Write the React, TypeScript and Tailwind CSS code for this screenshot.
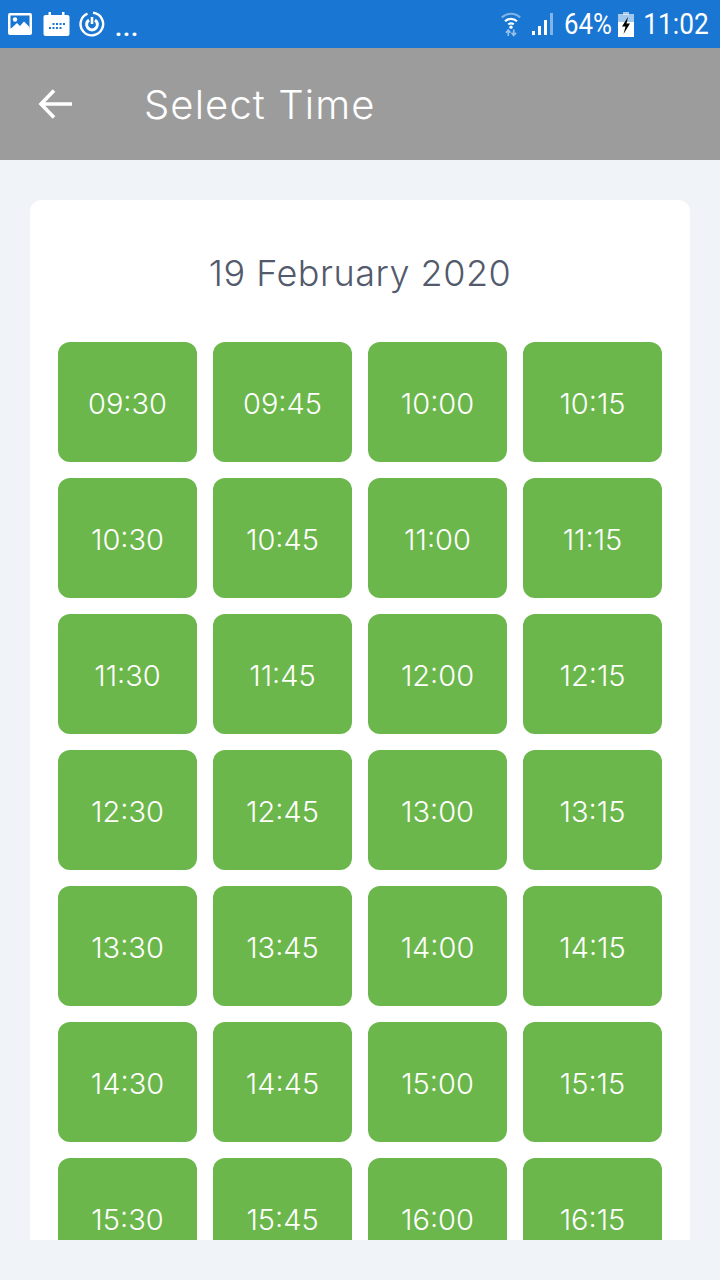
const times = [
  '09:30', '09:45', '10:00', '10:15',
  '10:30', '10:45', '11:00', '11:15',
  '11:30', '11:45', '12:00', '12:15',
  '12:30', '12:45', '13:00', '13:15',
  '13:30', '13:45', '14:00', '14:15',
  '14:30', '14:45', '15:00', '15:15',
  '15:30', '15:45', '16:00', '16:15',
]

function StatusBar() {
  return (
    <div className="h-[48px] bg-[#1976d3] flex items-center justify-between pl-[8px] pr-[11px] text-white font-['Roboto',sans-serif] shrink-0">
      <div className="flex items-center gap-[10px]">
        {/* picture */}
        <svg width="24" height="24" viewBox="0 0 24 24">
          <rect x="0" y="1" width="24" height="22" rx="2" fill="#fff" />
          <rect x="2.5" y="3.5" width="19" height="13" fill="#1976d3" />
          <circle cx="7" cy="7.5" r="2.2" fill="#fff" />
          <path d="M2.5 17 L9 11 L12 14 L16 9.5 L21.5 15 V20 H2.5 Z" fill="#fff" />
        </svg>
        {/* calendar */}
        <svg width="27" height="25" viewBox="0 0 26 25" className="ml-[1px]">
          <rect x="0" y="3" width="26" height="21" rx="2" fill="#fff" />
          <rect x="5" y="0" width="2.5" height="5" fill="#fff" />
          <rect x="18.5" y="0" width="2.5" height="5" fill="#fff" />
          <g fill="#1976d3">
            <rect x="9" y="11" width="2" height="2" />
            <rect x="12.5" y="11" width="2" height="2" />
            <rect x="16" y="11" width="2" height="2" />
            <rect x="19.5" y="11" width="2" height="2" />
            <rect x="5.5" y="15" width="2" height="2" />
            <rect x="9" y="15" width="2" height="2" />
            <rect x="12.5" y="15" width="2" height="2" />
            <rect x="16" y="15" width="2" height="2" />
          </g>
        </svg>
        {/* sync ring */}
        <svg width="26" height="26" viewBox="0 0 26 26" fill="none" stroke="#fff" className="-ml-[1px]">
          <path d="M14 1.8 A11.3 11.3 0 1 1 8.5 2.6" strokeWidth="2.4" />
          <path d="M10 9 A5.4 5.4 0 1 0 16 9" strokeWidth="3" />
          <path d="M13 6 V13" strokeWidth="2.6" />
        </svg>
        <span className="text-[24px] leading-none font-bold tracking-[1px] mt-[8px]">...</span>
      </div>
      <div className="flex items-center">
        {/* wifi */}
        <svg width="22" height="26" viewBox="0 0 24 28" fill="none" className="mr-[9px]">
          <path d="M2 7 A14 14 0 0 1 22 7" stroke="#fff" strokeOpacity="0.45" strokeWidth="2.4" />
          <path d="M5.5 11 A9.5 9.5 0 0 1 18.5 11" stroke="#fff" strokeWidth="2.4" />
          <path d="M9 14.5 A5 5 0 0 1 15 14.5" stroke="#fff" strokeWidth="2.4" />
          <circle cx="12" cy="17.5" r="1.8" fill="#fff" />
          <path d="M9 27 V21 M6.5 23.5 L9 20.5 L11.5 23.5" stroke="#fff" strokeOpacity="0.55" strokeWidth="1.8" />
          <path d="M15 20 V26 M12.5 23.5 L15 26.5 L17.5 23.5" stroke="#fff" strokeOpacity="0.55" strokeWidth="1.8" />
        </svg>
        {/* signal */}
        <svg width="24" height="26" viewBox="0 0 24 26" className="mr-[3px]">
          <rect x="1" y="20" width="3" height="4" fill="#fff" />
          <rect x="7" y="15" width="3" height="9" fill="#fff" />
          <rect x="13" y="9" width="3" height="15" fill="#fff" />
          <rect x="19" y="2" width="3" height="22" fill="#fff" fillOpacity="0.45" />
        </svg>
        <span className="text-[29px] leading-none scale-x-[0.89] origin-right">64%</span>
        {/* battery */}
        <svg width="16" height="25" viewBox="0 0 16 25" className="ml-[6px] mr-[7px]">
          <rect x="5" y="0" width="6" height="3" fill="#fff" fillOpacity="0.6" />
          <rect x="0" y="2" width="16" height="8" fill="#fff" fillOpacity="0.6" />
          <rect x="0" y="10" width="16" height="15" fill="#fff" />
          <path d="M10 5 L4 14.5 H7.5 L5.5 22 L12 11.5 H8.5 Z" fill="#000" />
        </svg>
        <span className="text-[30px] leading-none scale-x-[0.875] origin-right -ml-[7px]">11:02</span>
      </div>
    </div>
  )
}

export default function App() {
  return (
    <div className="w-[720px] h-[1280px] overflow-hidden bg-[#f0f4f8] flex flex-col font-['Inter',sans-serif]">
      <StatusBar />

      {/* Header */}
      <div className="h-[112px] bg-[#9c9c9c] flex items-center text-white shrink-0">
        <svg width="34" height="30" viewBox="0 0 34 30" fill="none" stroke="#fff" strokeWidth="3.6" className="ml-[38px]">
          <path d="M34 15H3 M16 1.5 L3 15 L16 28.5" />
        </svg>
        <h1 className="ml-[72px] pt-[2px] text-[40px] font-light leading-none tracking-[1.1px]">Select Time</h1>
      </div>

      {/* Card */}
      <div className="mx-[30px] mt-[40px] h-[1040px] bg-white rounded-t-[12px] overflow-hidden px-[28px]">
        <h2 className="h-[142px] flex items-center justify-center pt-[4px] text-[36px] font-light text-[#525a6b] tracking-[0.5px]">
          19 February 2020
        </h2>
        <div className="grid grid-cols-4 gap-[16px]">
          {times.map(t => (
            <button
              key={t}
              className="h-[120px] rounded-[12px] bg-[#6bb74b] text-white text-[29px] font-light flex items-center justify-center pt-[3px]"
            >
              {t}
            </button>
          ))}
        </div>
      </div>
    </div>
  )
}
